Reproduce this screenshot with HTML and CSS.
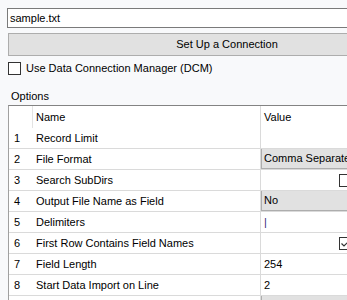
FILE: index.html
```html
<!DOCTYPE html>
<html>
<head>
	<title>Input Data</title>
	<link rel="stylesheet" href="styles.css">
</head>
<body>
	<div class="panel">
		<div class="file-input">sample.txt</div>
		<div class="connect-btn">Set Up a Connection</div>
		<label class="dcm-row">
			<span class="check-box"></span>
			<span>Use Data Connection Manager (DCM)</span>
		</label>
		<div class="options-label">Options</div>
		<div class="grid">
			<div class="grid-row grid-head">
				<div class="cell num-cell"></div>
				<div class="cell name-cell">Name</div>
				<div class="cell value-cell">Value</div>
			</div>
			<div class="grid-row">
				<div class="cell num-cell">1</div>
				<div class="cell name-cell">Record Limit</div>
				<div class="cell value-cell"></div>
			</div>
			<div class="grid-row">
				<div class="cell num-cell">2</div>
				<div class="cell name-cell">File Format</div>
				<div class="cell value-cell"><div class="combo">Comma Separated</div></div>
			</div>
			<div class="grid-row">
				<div class="cell num-cell">3</div>
				<div class="cell name-cell">Search SubDirs</div>
				<div class="cell value-cell check-cell"><span class="check-box"></span></div>
			</div>
			<div class="grid-row">
				<div class="cell num-cell">4</div>
				<div class="cell name-cell">Output File Name as Field</div>
				<div class="cell value-cell"><div class="combo">No</div></div>
			</div>
			<div class="grid-row">
				<div class="cell num-cell">5</div>
				<div class="cell name-cell">Delimiters</div>
				<div class="cell value-cell delim">|</div>
			</div>
			<div class="grid-row">
				<div class="cell num-cell">6</div>
				<div class="cell name-cell">First Row Contains Field Names</div>
				<div class="cell value-cell check-cell">
					<span class="check-box">
						<svg width="11" height="11" viewBox="0 0 11 11"><polyline points="1.5,5.5 4,8 9.5,2.5" fill="none" stroke="#333" stroke-width="1.2"/></svg>
					</span>
				</div>
			</div>
			<div class="grid-row">
				<div class="cell num-cell">7</div>
				<div class="cell name-cell">Field Length</div>
				<div class="cell value-cell">254</div>
			</div>
			<div class="grid-row">
				<div class="cell num-cell">8</div>
				<div class="cell name-cell">Start Data Import on Line</div>
				<div class="cell value-cell">2</div>
			</div>
			<div class="grid-row">
				<div class="cell num-cell"></div>
				<div class="cell name-cell"></div>
				<div class="cell value-cell"><div class="combo"></div></div>
			</div>
		</div>
	</div>
</body>
</html>
```

FILE: styles.css
```css
body {
	margin: 0;
	padding: 0;
	background: #f8f9fb;
	font-family: 'Liberation Sans', Arial, sans-serif;
	font-size: 11px;
	line-height: 13px;
	color: #000;
	overflow: hidden;
}
.panel {
	padding-top: 8px;
	width: 460px;
}
.file-input {
	margin-left: 7px;
	width: 440px;
	height: 20px;
	box-sizing: border-box;
	border: 1px solid #7a7a7a;
	background: #fff;
	padding-left: 2px;
	display: flex;
	align-items: center;
}
.connect-btn {
	margin: 5px 0 0 8px;
	width: 438px;
	height: 23px;
	box-sizing: border-box;
	border: 1px solid #adadad;
	background: #e1e1e1;
	display: flex;
	align-items: center;
	justify-content: center;
}
.dcm-row {
	margin: 6px 0 0 8px;
	display: flex;
	align-items: center;
	gap: 5px;
	height: 13px;
}
.check-box {
	width: 13px;
	height: 13px;
	box-sizing: border-box;
	border: 1px solid #333;
	background: #fff;
	display: flex;
	align-items: center;
	justify-content: center;
	flex: none;
}
.options-label {
	margin: 15px 0 0 11px;
}
.grid {
	margin: 2px 0 0 8px;
	width: 440px;
	border-top: 1px solid #838383;
	border-left: 1px solid #a0a0a0;
	background: #fff;
}
.grid-row {
	display: grid;
	grid-template-columns: 24px 228px 1fr;
	height: 21px;
	box-sizing: border-box;
	border-bottom: 1px solid #dadada;
}
.grid-head {
	height: 22px;
	border-bottom: none;
}
.cell {
	display: flex;
	align-items: center;
	white-space: nowrap;
	overflow: hidden;
}
.num-cell {
	padding-left: 5px;
}
.grid-head .num-cell {
	border-right: 1px solid #e3e3e3;
	box-sizing: border-box;
}
.name-cell {
	padding-left: 3px;
	border-right: 1px solid #dadada;
	box-sizing: border-box;
}
.value-cell {
	padding-left: 3px;
}
.value-cell:has(.combo) {
	padding-left: 0;
	align-items: stretch;
}
.combo {
	flex: 1;
	box-sizing: border-box;
	border: 1px solid #adadad;
	background: #e1e1e1;
	padding-left: 2px;
	display: flex;
	align-items: center;
	margin-top: -1px;
	height: 21px;
}
.check-cell {
	padding-left: 78px;
}
.delim {
	color: #3a2a7a;
}
```
